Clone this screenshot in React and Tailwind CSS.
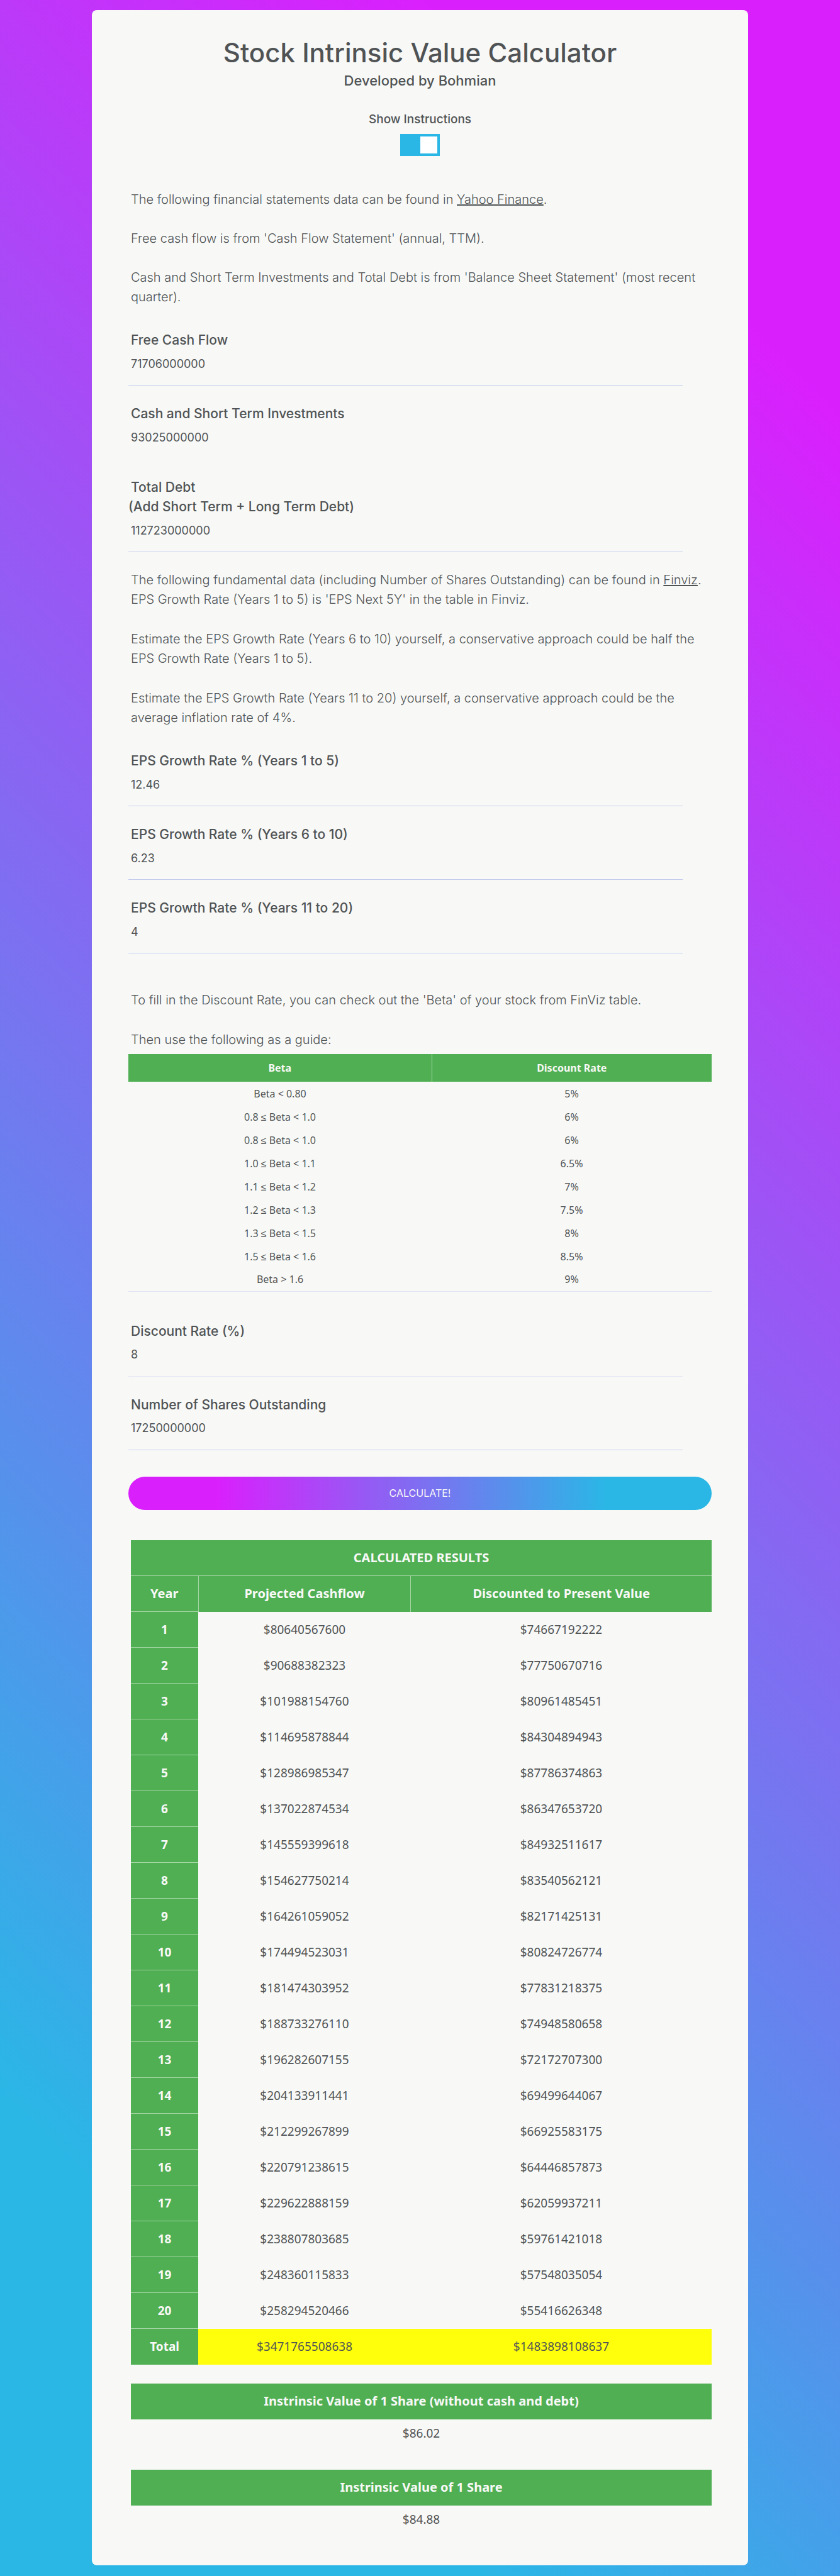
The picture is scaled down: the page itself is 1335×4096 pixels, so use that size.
import { useState } from 'react';

const betaRows = [
  ['Beta < 0.80', '5%'],
  ['0.8 ≤ Beta < 1.0', '6%'],
  ['0.8 ≤ Beta < 1.0', '6%'],
  ['1.0 ≤ Beta < 1.1', '6.5%'],
  ['1.1 ≤ Beta < 1.2', '7%'],
  ['1.2 ≤ Beta < 1.3', '7.5%'],
  ['1.3 ≤ Beta < 1.5', '8%'],
  ['1.5 ≤ Beta < 1.6', '8.5%'],
  ['Beta > 1.6', '9%'],
];

const results = [
  ['80640567600', '74667192222'],
  ['90688382323', '77750670716'],
  ['101988154760', '80961485451'],
  ['114695878844', '84304894943'],
  ['128986985347', '87786374863'],
  ['137022874534', '86347653720'],
  ['145559399618', '84932511617'],
  ['154627750214', '83540562121'],
  ['164261059052', '82171425131'],
  ['174494523031', '80824726774'],
  ['181474303952', '77831218375'],
  ['188733276110', '74948580658'],
  ['196282607155', '72172707300'],
  ['204133911441', '69499644067'],
  ['212299267899', '66925583175'],
  ['220791238615', '64446857873'],
  ['229622888159', '62059937211'],
  ['238807803685', '59761421018'],
  ['248360115833', '57548035054'],
  ['258294520466', '55416626348'],
];

function Field({ id, label, note, value, line = 'border-[#c3cbee]' }) {
  return (
    <div className="h-[117px] data-[note=true]:h-[148px]" data-note={Boolean(note)}>
      <label htmlFor={id} className="block text-[21px] leading-[31px] font-medium">
        <span className="pl-1">{label}</span>
        {note && (
          <>
            <br />
            {note}
          </>
        )}
      </label>
      <input
        id={id}
        type="text"
        defaultValue={value}
        className={`mt-1 block h-[53px] w-[95%] border-b bg-transparent pb-4 pl-1 text-[18px] outline-none ${line}`}
      />
    </div>
  );
}

function ShareValue({ title, value }) {
  return (
    <table className="w-full border-collapse text-center font-['Noto_Sans',sans-serif] text-[19px]">
      <thead>
        <tr className="h-[57px] bg-[#50af53] text-[20px] text-[#f8f9f7]">
          <th className="font-bold">{title}</th>
        </tr>
      </thead>
      <tbody>
        <tr className="h-[50px]">
          <td className="pb-1">{value}</td>
        </tr>
      </tbody>
    </table>
  );
}

export default function App() {
  const [shown, setShown] = useState(true);
  return (
    <div className="min-h-screen bg-[linear-gradient(225deg,#da1ffd_12%,#2ab7e6_86%)] px-4 py-4 font-['Inter',sans-serif] text-[#505355]">
      <main className="mx-auto w-full max-w-[1043px] rounded-lg bg-[#f8f9f7] px-[58px] pt-10 pb-[45px]">
        <header className="text-center">
          <h1 className="text-[42px] leading-[56px] font-medium">Stock Intrinsic Value Calculator</h1>
          <p className="text-[22px] leading-[32px] font-medium">Developed by Bohmian</p>
          <label htmlFor="instructions" className="mt-[31px] block text-[19px] leading-[30px] font-medium">
            Show Instructions
          </label>
          <span className="relative mx-auto mt-2 block h-[35px] w-[63px]">
            <input
              id="instructions"
              type="checkbox"
              checked={shown}
              onChange={(e) => setShown(e.target.checked)}
              className="peer block h-full w-full cursor-pointer appearance-none bg-[#ccc] checked:bg-[#2ab7e6]"
            />
            <span className="pointer-events-none absolute top-1 left-1 size-[27px] bg-white peer-checked:left-8" />
          </span>
        </header>

        {shown && (
          <section className="mt-[54px] pl-1 text-[20px] leading-[31px] font-light">
            <p>
              The following financial statements data can be found in{' '}
              <a href="#yahoo" className="underline">Yahoo Finance</a>.
            </p>
            <p className="mt-[31px]">Free cash flow is from 'Cash Flow Statement' (annual, TTM).</p>
            <p className="mt-[31px]">
              Cash and Short Term Investments and Total Debt is from 'Balance Sheet Statement' (most recent
              <br />
              quarter).
            </p>
          </section>
        )}

        <section className="mt-[37px]">
          <Field id="fcf" label="Free Cash Flow" value="71706000000" />
          <Field id="cash" label="Cash and Short Term Investments" value="93025000000" line="border-transparent" />
          <Field id="debt" label="Total Debt" note="(Add Short Term + Long Term Debt)" value="112723000000" />
        </section>

        {shown && (
          <section className="pl-1 text-[20px] leading-[31px] font-light">
            <p>
              The following fundamental data (including Number of Shares Outstanding) can be found in{' '}
              <a href="#finviz" className="underline">Finviz</a>.
              <br />
              EPS Growth Rate (Years 1 to 5) is 'EPS Next 5Y' in the table in Finviz.
            </p>
            <p className="mt-8">
              Estimate the EPS Growth Rate (Years 6 to 10) yourself, a conservative approach could be half the
              <br />
              EPS Growth Rate (Years 1 to 5).
            </p>
            <p className="mt-8">
              Estimate the EPS Growth Rate (Years 11 to 20) yourself, a conservative approach could be the
              <br />
              average inflation rate of 4%.
            </p>
          </section>
        )}

        <section className="mt-[37px]">
          <Field id="g5" label="EPS Growth Rate % (Years 1 to 5)" value="12.46" />
          <Field id="g10" label="EPS Growth Rate % (Years 6 to 10)" value="6.23" />
          <Field id="g20" label="EPS Growth Rate % (Years 11 to 20)" value="4" />
        </section>

        {shown && (
          <section className="mt-[30px]">
            <div className="pl-1 text-[20px] leading-[31px] font-light">
              <p>To fill in the Discount Rate, you can check out the 'Beta' of your stock from FinViz table.</p>
              <p className="mt-8">Then use the following as a guide:</p>
            </div>
            <table className="mt-[7px] w-full table-fixed border-collapse border-b border-[#dfe3f3] text-center font-['Noto_Sans',sans-serif] text-[16px]">
              <thead>
                <tr className="h-11 bg-[#50af53] text-[#f8f9f7]">
                  <th className="w-[52%] border-r border-[#a5d6a5] font-bold">Beta</th>
                  <th className="font-bold">Discount Rate</th>
                </tr>
              </thead>
              <tbody>
                {betaRows.map(([beta, rate], i) => (
                  <tr key={i} className="h-[37px]">
                    <td>{beta}</td>
                    <td>{rate}</td>
                  </tr>
                ))}
              </tbody>
            </table>
          </section>
        )}

        <section className="mt-[47px]">
          <Field id="rate" label="Discount Rate (%)" value="8" line="border-[#e3e6f5]" />
          <Field id="shares" label="Number of Shares Outstanding" value="17250000000" />
        </section>

        <button
          type="button"
          className="mt-[13px] block h-[53px] w-full cursor-pointer rounded-full bg-[linear-gradient(90deg,#da1ffd_15%,#2ab7e6_82%)] text-[16px] text-[#f8f9f7]"
        >
          CALCULATE!
        </button>

        <section className="mt-12 flex flex-col gap-[30px] pl-1">
          <table className="w-full table-fixed border-collapse text-center font-['Noto_Sans',sans-serif] text-[19px]">
            <colgroup>
              <col className="w-[11.6%]" />
              <col className="w-[36.6%]" />
              <col />
            </colgroup>
            <thead className="bg-[#50af53] text-[20px] text-[#f8f9f7]">
              <tr className="h-[57px] border-b border-[#a5d6a5]">
                <th colSpan={3} className="font-bold">CALCULATED RESULTS</th>
              </tr>
              <tr className="h-[57px]">
                <th className="border-r border-[#a5d6a5] font-bold">Year</th>
                <th className="border-r border-[#a5d6a5] font-bold">Projected Cashflow</th>
                <th className="font-bold">Discounted to Present Value</th>
              </tr>
            </thead>
            <tbody>
              {results.map(([cash, present], i) => (
                <tr key={i} className="h-[57px]">
                  <th className="border-t border-[#a5d6a5] bg-[#50af53] font-bold text-[#f8f9f7]">{i + 1}</th>
                  <td>${cash}</td>
                  <td>${present}</td>
                </tr>
              ))}
              <tr className="h-[57px] bg-[#ffff0b]">
                <th className="border-t border-[#a5d6a5] bg-[#50af53] font-bold text-[#f8f9f7]">Total</th>
                <td>$3471765508638</td>
                <td>$1483898108637</td>
              </tr>
            </tbody>
          </table>
          <ShareValue title="Instrinsic Value of 1 Share (without cash and debt)" value="$86.02" />
          <ShareValue title="Instrinsic Value of 1 Share" value="$84.88" />
        </section>
      </main>
    </div>
  );
}
